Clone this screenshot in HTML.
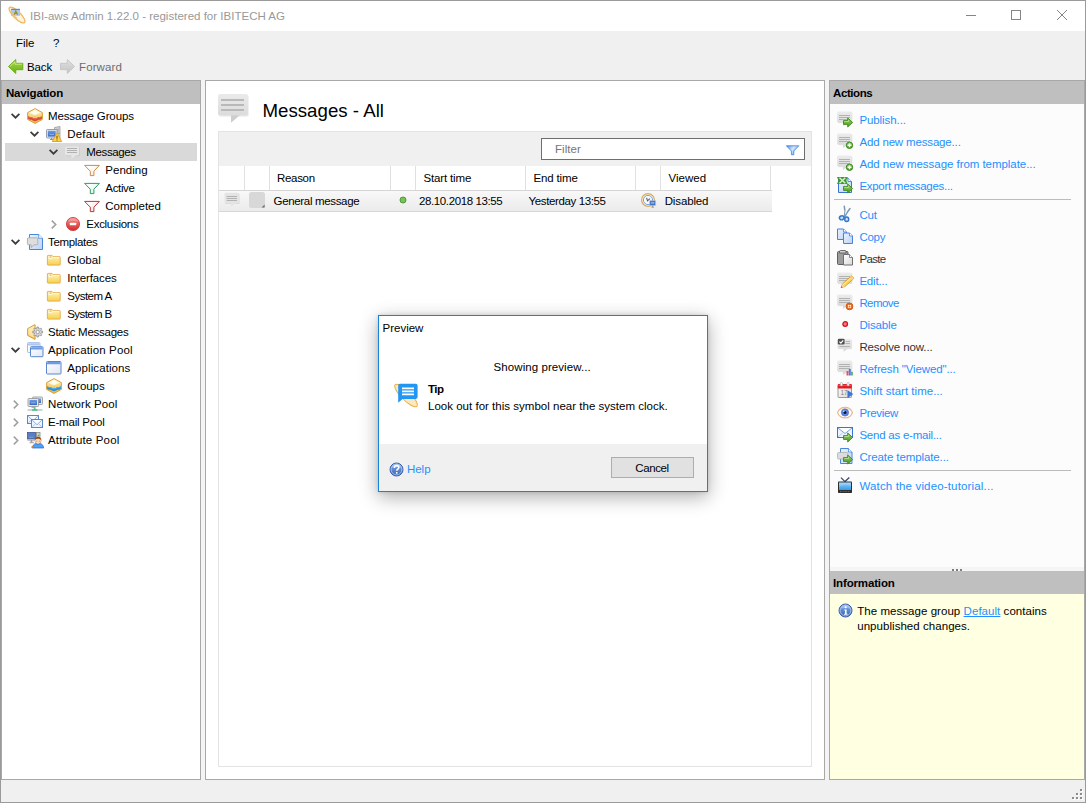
<!DOCTYPE html>
<html><head><meta charset="utf-8"><title>IBI-aws Admin</title>
<style>
*{box-sizing:border-box;margin:0;padding:0}
html,body{width:1086px;height:803px;overflow:hidden}
body{background:#f0f0f0;font-family:"Liberation Sans",sans-serif;font-size:11.5px;color:#000;position:relative}
.abs{position:absolute}
.t{position:absolute;white-space:nowrap;line-height:14px;height:14px}
.b{font-weight:bold}
svg{position:absolute;overflow:visible}
svg.i{width:16px;height:16px}
#win{position:absolute;left:0;top:0;width:1086px;height:803px;border:1px solid #9a9a9a}
#title{position:absolute;left:1px;top:1px;width:1084px;height:30px;background:#fff}
.hdr{position:absolute;height:23px;background:#bfbfbf}
.panel{position:absolute;background:#fff;border:1px solid #a8a8a8}
.lnk{color:#1e90ff}
.vs{position:absolute;width:1px;background:#e0e0e0;top:166px;height:24px}
</style></head><body>

<svg width="0" height="0" style="left:-10px;top:-10px"><defs><linearGradient id="gBub" x1="0" y1="0" x2="0" y2="1"><stop offset="0" stop-color="#ececec"/><stop offset="1" stop-color="#d6d6d6"/></linearGradient><linearGradient id="gBubL" x1="0" y1="0" x2="0" y2="1"><stop offset="0" stop-color="#eaeaea"/><stop offset="1" stop-color="#dcdcdc"/></linearGradient><linearGradient id="gGreen" x1="0" y1="0" x2="0" y2="1"><stop offset="0" stop-color="#a4d84a"/><stop offset="1" stop-color="#6cb010"/></linearGradient><linearGradient id="gGA" x1="0" y1="0" x2="0" y2="1"><stop offset="0" stop-color="#9ad06a"/><stop offset="1" stop-color="#4a9a20"/></linearGradient><linearGradient id="gFold" x1="0" y1="0" x2="0" y2="1"><stop offset="0" stop-color="#fef6d0"/><stop offset="0.35" stop-color="#fbe89a"/><stop offset="1" stop-color="#f7d04a"/></linearGradient><linearGradient id="gRed" x1="0" y1="0" x2="0" y2="1"><stop offset="0" stop-color="#f48a84"/><stop offset="1" stop-color="#d42c2c"/></linearGradient><linearGradient id="gWin" x1="0" y1="0" x2="1" y2="1"><stop offset="0" stop-color="#fff"/><stop offset="1" stop-color="#dfe6f4"/></linearGradient><linearGradient id="gBox" x1="0" y1="0" x2="0" y2="1"><stop offset="0" stop-color="#fdf0c0"/><stop offset="1" stop-color="#f4b830"/></linearGradient><linearGradient id="gDoc" x1="0" y1="0" x2="1" y2="1"><stop offset="0" stop-color="#eaf2fe"/><stop offset="1" stop-color="#bcd4f6"/></linearGradient><linearGradient id="gScr" x1="0" y1="0" x2="0" y2="1"><stop offset="0" stop-color="#6a9ae4"/><stop offset="1" stop-color="#3a6cc8"/></linearGradient><linearGradient id="gInfo" x1="0" y1="0" x2="0" y2="1"><stop offset="0" stop-color="#86aee6"/><stop offset="1" stop-color="#3464bc"/></linearGradient><linearGradient id="gTv" x1="0" y1="0" x2="0" y2="1"><stop offset="0" stop-color="#8ad0fa"/><stop offset="1" stop-color="#3a98e8"/></linearGradient><linearGradient id="gPap" x1="0" y1="0" x2="1" y2="1"><stop offset="0" stop-color="#fff"/><stop offset="1" stop-color="#d8d8d8"/></linearGradient><linearGradient id="gGray" x1="0" y1="0" x2="0" y2="1"><stop offset="0" stop-color="#e0e0e0"/><stop offset="1" stop-color="#c4c4c4"/></linearGradient></defs></svg>
<div id="win"></div><div id="title"></div>
<svg class="i" style="left:8px;top:8px" viewBox="0 0 16 16"><ellipse cx="9" cy="7" rx="10.600" ry="3.500" transform="rotate(45 9 7)" fill="#fef4de" stroke="#efb860" stroke-width="1.300"/><rect x="3" y="1" width="9" height="6.800" fill="#a8c8ee"/><path d="M3 1.300h9" stroke="#4e6e96" stroke-width="0.900"/><path d="M5.200 7.500l-1.500-2 -0.700-3.500" stroke="#efb860" stroke-width="1" fill="none" opacity="0.700"/><path d="M6.200 6.800l1.600-4 1.800 4M6.900 5.500h2" stroke="#a88a18" stroke-width="1.100" fill="none"/><path d="M3 4l6 6.500" stroke="#f4c46c" stroke-width="1.200" opacity="0.800"/></svg>
<div class="t " style="left:30px;top:9px;color:#999;letter-spacing:0.013px;">IBI-aws Admin 1.22.0 - registered for IBITECH AG</div>
<svg style="left:960px;top:5px" width="120" height="22" viewBox="0 0 120 22"><path d="M6 10.5h10" stroke="#858585" stroke-width="1" fill="none"/><rect x="51.5" y="5.5" width="9" height="9" stroke="#858585" fill="none"/><path d="M97 5l10 10M107 5l-10 10" stroke="#858585" stroke-width="1" fill="none"/></svg>
<div class="t " style="left:16px;top:35.5px;letter-spacing:-0.083px;">File</div>
<div class="t " style="left:53px;top:35.5px;">?</div>
<svg class="i" style="left:8px;top:59px" viewBox="0 0 16 16"><path d="M0.500 7.500L7.800 0.500v3.800h7v6.400h-7v3.800z" fill="url(#gGreen)" stroke="#66aa10" stroke-width="0.900" stroke-linejoin="round"/><path d="M2 7.500L7 2.700v2.500h7" stroke="#cdee84" stroke-width="0.900" fill="none"/></svg>
<div class="t " style="left:27px;top:59.5px;letter-spacing:-0.145px;">Back</div>
<svg class="i" style="left:60px;top:59px" viewBox="0 0 16 16"><path d="M14.600 7.500L7.300 0.500v3.800H0.500v6.400h6.800v3.800z" fill="url(#gGray)" stroke="#c2c2c2" stroke-width="0.800" stroke-linejoin="round"/></svg>
<div class="t " style="left:79px;top:59.5px;color:#6d6d6d;letter-spacing:0.116px;">Forward</div>
<div class="abs" style="left:201px;top:80px;width:4px;height:700px;background:#f4f4f4"></div><div class="abs" style="left:825px;top:80px;width:4px;height:700px;background:#f4f4f4"></div>
<div class="panel" style="left:1px;top:80px;width:200px;height:700px"></div>
<div class="hdr" style="left:2px;top:81px;width:198px"></div>
<div class="t b" style="left:6px;top:86px;letter-spacing:-0.180px;">Navigation</div>
<div class="abs" style="left:5px;top:143px;width:192px;height:18px;background:#d9d9d9"></div>
<svg style="left:11px;top:113px" width="9" height="6" viewBox="0 0 9 6"><path d="M0.6 0.8L4.5 4.7L8.4 0.8" stroke="#3c3c3c" stroke-width="1.7" fill="none"/></svg>
<svg class="i" style="left:27px;top:108px" viewBox="0 0 16 16"><path d="M8 0.600L15.400 4.600v6.800L8 15.400 0.600 11.400V4.600z" fill="url(#gBox)" stroke="#d8a040" stroke-width="1" stroke-linejoin="round"/><path d="M8 1.600L14 4.800 8 7.600 2 4.800z" fill="#fdf6dc"/><path d="M8 2.400L11.500 4.600 8 6.300 4.500 4.600z" fill="#fffef6"/><path d="M1.100 8.300l1.700 0.700 1.700-0.100 1.700 1 1.800 0.400 1.800-0.400 1.700-1 1.700 0.100 1.700-0.700v2.500l-1.700 0.900-1.700 0.100-1.700 0.900-1.800 0.500-1.800-0.500-1.700-0.900-1.700-0.100-1.700-0.900z" fill="#d8483a"/><path d="M1.100 8.300l1.700 0.700 1.700-0.100 1.700 1 1.800 0.400 1.800-0.400 1.700-1 1.700 0.100 1.700-0.700v1l-1.700 0.800-1.700 0-1.700 0.900-1.800 0.400-1.800-0.400-1.700-0.900-1.700 0-1.700-0.800z" fill="#e8685a"/><path d="M8 7.600v2" stroke="#e8b84a" stroke-width="0.600"/></svg>
<div class="t " style="left:48px;top:109px;letter-spacing:-0.127px;">Message Groups</div>
<svg style="left:30px;top:131px" width="9" height="6" viewBox="0 0 9 6"><path d="M0.6 0.8L4.5 4.7L8.4 0.8" stroke="#3c3c3c" stroke-width="1.7" fill="none"/></svg>
<svg class="i" style="left:46px;top:126px" viewBox="0 0 16 16"><path d="M8.500 1.500l5.500-1v12.500l-5.500 0.500z" fill="#d4d4d4" stroke="#9a9a9a" stroke-width="0.800"/><path d="M10 3.300h3M10 5h3" stroke="#8a8a8a" stroke-width="0.700"/><circle cx="12.800" cy="7.200" r="0.700" fill="#4aba4a"/><rect x="0.500" y="3.500" width="10.500" height="8.500" rx="0.800" fill="#e4e8ee" stroke="#8a96a8" stroke-width="0.900"/><rect x="1.800" y="4.800" width="7.900" height="5.800" fill="url(#gScr)"/><path d="M3.500 8.600h4.500" stroke="#9ac0f4" stroke-width="0.800"/><path d="M4 13.500h5M5.500 12v1.500" stroke="#8a96a8" stroke-width="1"/><path d="M11 6.800L15.700 15.500H6.300z" fill="#fbd648" stroke="#e09a30" stroke-width="0.900" stroke-linejoin="round"/><path d="M11 9.800v3" stroke="#9a5a00" stroke-width="1.200"/><rect x="10.400" y="13.400" width="1.200" height="1.100" fill="#9a5a00"/></svg>
<div class="t " style="left:67.3px;top:127px;letter-spacing:0.180px;">Default</div>
<svg style="left:49px;top:149px" width="9" height="6" viewBox="0 0 9 6"><path d="M0.6 0.8L4.5 4.7L8.4 0.8" stroke="#3c3c3c" stroke-width="1.7" fill="none"/></svg>
<svg class="i" style="left:65px;top:144px" viewBox="0 0 16 16"><rect x="0.6" y="3.3" width="14" height="9" rx="1.2" fill="#000" opacity="0.09"/><path d="M1.2 2.5h11.6a1.2 1.2 0 0 1 1.2 1.2v6.6a1.2 1.2 0 0 1-1.2 1.2H11.0l-4.500 3v-3H1.2a1.2 1.2 0 0 1-1.2-1.2v-6.6a1.2 1.2 0 0 1 1.2-1.2z" fill="#e6e6e6"/><path d="M2 4.5H12" stroke="#b2b2b2" stroke-width="1"/><path d="M2 6.5H12" stroke="#b2b2b2" stroke-width="1"/><path d="M2 8.5H12" stroke="#b2b2b2" stroke-width="1"/></svg>
<div class="t " style="left:86.3px;top:145px;letter-spacing:-0.378px;">Messages</div>
<svg class="i" style="left:84px;top:162px" viewBox="0 0 16 16"><linearGradient id="gfo" x1="0" y1="0" x2="1" y2="0.600"><stop offset="0.350" stop-color="#fff"/><stop offset="1" stop-color="#fbe9d6"/></linearGradient><path d="M0.600 3.400h14.800L9.900 9.200v4.400h-3.600V9.200z" fill="url(#gfo)" stroke="#cf8a4c" stroke-width="1" stroke-linejoin="miter"/></svg>
<div class="t " style="left:105.3px;top:163px;letter-spacing:0.026px;">Pending</div>
<svg class="i" style="left:84px;top:180px" viewBox="0 0 16 16"><linearGradient id="gfg" x1="0" y1="0" x2="1" y2="0.600"><stop offset="0.350" stop-color="#fff"/><stop offset="1" stop-color="#d4f2e2"/></linearGradient><path d="M0.600 3.400h14.800L9.900 9.200v4.400h-3.600V9.200z" fill="url(#gfg)" stroke="#2c9e68" stroke-width="1" stroke-linejoin="miter"/></svg>
<div class="t " style="left:105.3px;top:181px;letter-spacing:-0.338px;">Active</div>
<svg class="i" style="left:84px;top:198px" viewBox="0 0 16 16"><linearGradient id="gfr" x1="0" y1="0" x2="1" y2="0.600"><stop offset="0.350" stop-color="#fff"/><stop offset="1" stop-color="#f6d8d8"/></linearGradient><path d="M0.600 3.400h14.800L9.900 9.200v4.400h-3.600V9.200z" fill="url(#gfr)" stroke="#b43a3e" stroke-width="1" stroke-linejoin="miter"/></svg>
<div class="t " style="left:105.3px;top:199px;letter-spacing:-0.003px;">Completed</div>
<svg style="left:51px;top:220px" width="6" height="9" viewBox="0 0 6 9"><path d="M0.8 0.6L4.7 4.5L0.8 8.4" stroke="#a0a0a0" stroke-width="1.6" fill="none"/></svg>
<svg class="i" style="left:65px;top:216px" viewBox="0 0 16 16"><circle cx="8" cy="8" r="6.600" fill="url(#gRed)" stroke="#c83838" stroke-width="0.800"/><path d="M2.600 6a5.800 5.800 0 0 1 10.800 0c-3-1.200-7.800-1.200-10.800 0z" fill="#fff" opacity="0.250"/><rect x="4.800" y="6.800" width="6.400" height="2.400" rx="0.500" fill="#fff"/></svg>
<div class="t " style="left:86.3px;top:217px;letter-spacing:-0.287px;">Exclusions</div>
<svg style="left:11px;top:239px" width="9" height="6" viewBox="0 0 9 6"><path d="M0.6 0.8L4.5 4.7L8.4 0.8" stroke="#3c3c3c" stroke-width="1.7" fill="none"/></svg>
<svg class="i" style="left:27px;top:234px" viewBox="0 0 16 16"><path d="M2.500 0.500h9.200l3.800 3.800v11.200h-13z" fill="url(#gDoc)" stroke="#4a86d8" stroke-width="1" stroke-linejoin="round"/><path d="M11.700 0.500v3.800h3.800" fill="#fff" stroke="#4a86d8" stroke-width="0.800" stroke-linejoin="round"/><path d="M1.600 3.800h8a1.200 1.200 0 0 1 1.200 1.200v4.600a1.200 1.200 0 0 1-1.200 1.200H7l-2.800 2.800v-2.800H1.600a1.200 1.200 0 0 1-1.200-1.200V5a1.200 1.200 0 0 1 1.200-1.200z" fill="#dedede" stroke="#a4a4a4" stroke-width="0.800"/></svg>
<div class="t " style="left:48px;top:235px;letter-spacing:-0.336px;">Templates</div>
<svg class="i" style="left:46px;top:252px" viewBox="0 0 16 16"><path d="M1.400 4a0.600 0.600 0 0 1 0.600-0.600h4l1 1.200h6.600a0.600 0.600 0 0 1 0.600 0.600v7.300a0.600 0.600 0 0 1-0.600 0.600H2a0.600 0.600 0 0 1-0.600-0.600z" fill="url(#gFold)" stroke="#e6a648" stroke-width="0.900"/><path d="M2.300 6.400h3.800l0.900-1h6.200" stroke="#fffbe6" stroke-width="0.900" fill="none"/><path d="M3.800 5h1.600" stroke="#e0b050" stroke-width="1"/></svg>
<div class="t " style="left:67.3px;top:253px;letter-spacing:0.058px;">Global</div>
<svg class="i" style="left:46px;top:270px" viewBox="0 0 16 16"><path d="M1.400 4a0.600 0.600 0 0 1 0.600-0.600h4l1 1.200h6.600a0.600 0.600 0 0 1 0.600 0.600v7.300a0.600 0.600 0 0 1-0.600 0.600H2a0.600 0.600 0 0 1-0.600-0.600z" fill="url(#gFold)" stroke="#e6a648" stroke-width="0.900"/><path d="M2.300 6.400h3.800l0.900-1h6.200" stroke="#fffbe6" stroke-width="0.900" fill="none"/><path d="M3.800 5h1.600" stroke="#e0b050" stroke-width="1"/></svg>
<div class="t " style="left:67.3px;top:271px;letter-spacing:-0.120px;">Interfaces</div>
<svg class="i" style="left:46px;top:288px" viewBox="0 0 16 16"><path d="M1.400 4a0.600 0.600 0 0 1 0.600-0.600h4l1 1.200h6.600a0.600 0.600 0 0 1 0.600 0.600v7.300a0.600 0.600 0 0 1-0.600 0.600H2a0.600 0.600 0 0 1-0.600-0.600z" fill="url(#gFold)" stroke="#e6a648" stroke-width="0.900"/><path d="M2.300 6.400h3.800l0.900-1h6.200" stroke="#fffbe6" stroke-width="0.900" fill="none"/><path d="M3.800 5h1.600" stroke="#e0b050" stroke-width="1"/></svg>
<div class="t " style="left:67.3px;top:289px;letter-spacing:-0.522px;">System A</div>
<svg class="i" style="left:46px;top:306px" viewBox="0 0 16 16"><path d="M1.400 4a0.600 0.600 0 0 1 0.600-0.600h4l1 1.200h6.600a0.600 0.600 0 0 1 0.600 0.600v7.300a0.600 0.600 0 0 1-0.600 0.600H2a0.600 0.600 0 0 1-0.600-0.600z" fill="url(#gFold)" stroke="#e6a648" stroke-width="0.900"/><path d="M2.300 6.400h3.800l0.900-1h6.200" stroke="#fffbe6" stroke-width="0.900" fill="none"/><path d="M3.800 5h1.600" stroke="#e0b050" stroke-width="1"/></svg>
<div class="t " style="left:67.3px;top:307px;letter-spacing:-0.602px;">System B</div>
<svg class="i" style="left:27px;top:324px" viewBox="0 0 16 16"><path d="M8 0.600v14.800L0.600 11.400V4.600z" fill="url(#gBox)" stroke="#d8a040" stroke-width="1" stroke-linejoin="round"/><path d="M7.500 1.800L1.600 5v5.800l5.900 3.200z" fill="#fdeebc" opacity="0.700"/><path d="M8 1v14" stroke="#e8b048" stroke-width="0.800"/><path d="M15.63 7.14L15.63 8.86L14.10 8.82L13.68 9.83L14.79 10.88L13.58 12.09L12.53 10.98L11.52 11.40L11.56 12.93L9.84 12.93L9.88 11.40L8.87 10.98L7.82 12.09L6.61 10.88L7.72 9.83L7.30 8.82L5.77 8.86L5.77 7.14L7.30 7.18L7.72 6.17L6.61 5.12L7.82 3.91L8.87 5.02L9.88 4.60L9.84 3.07L11.56 3.07L11.52 4.60L12.53 5.02L13.58 3.91L14.79 5.12L13.68 6.17L14.10 7.18z" fill="#dcdcdc" stroke="#8c8c8c" stroke-width="0.800" stroke-linejoin="round"/><circle cx="10.700" cy="8" r="1.700" fill="#fcfcfc" stroke="#8c8c8c" stroke-width="0.800"/></svg>
<div class="t " style="left:48px;top:325px;letter-spacing:-0.265px;">Static Messages</div>
<svg style="left:11px;top:347px" width="9" height="6" viewBox="0 0 9 6"><path d="M0.6 0.8L4.5 4.7L8.4 0.8" stroke="#3c3c3c" stroke-width="1.7" fill="none"/></svg>
<svg class="i" style="left:27px;top:342px" viewBox="0 0 16 16"><g opacity="0.55"><rect x="0.5" y="0.7" width="12.5" height="9.8" rx="0.800" fill="url(#gWin)" stroke="#5a86d0" stroke-width="1"/><path d="M1.0 3.5v-1.300a1 1 0 0 1 1-1h9.5a1 1 0 0 1 1 1v1.300z" fill="#6e9ce6"/></g><g opacity="1"><rect x="3.5" y="4.7" width="12.5" height="10" rx="0.800" fill="url(#gWin)" stroke="#5a86d0" stroke-width="1"/><path d="M4.0 7.5v-1.300a1 1 0 0 1 1-1h9.5a1 1 0 0 1 1 1v1.300z" fill="#6e9ce6"/></g></svg>
<div class="t " style="left:48px;top:343px;letter-spacing:0.138px;">Application Pool</div>
<svg class="i" style="left:46px;top:360px" viewBox="0 0 16 16"><g opacity="1"><rect x="0.5" y="1.5" width="14.5" height="12.5" rx="0.800" fill="url(#gWin)" stroke="#5a86d0" stroke-width="1"/><path d="M1.0 4.3v-1.300a1 1 0 0 1 1-1h11.5a1 1 0 0 1 1 1v1.300z" fill="#6e9ce6"/></g></svg>
<div class="t " style="left:67.3px;top:361px;letter-spacing:0.090px;">Applications</div>
<svg class="i" style="left:46px;top:378px" viewBox="0 0 16 16"><path d="M8 0.600L15.400 4.600v6.800L8 15.400 0.600 11.400V4.600z" fill="url(#gBox)" stroke="#d8a040" stroke-width="1" stroke-linejoin="round"/><path d="M8 1.600L14 4.800 8 7.600 2 4.800z" fill="#fdf6dc"/><path d="M8 2.400L11.500 4.600 8 6.300 4.500 4.600z" fill="#fffef6"/><path d="M1.100 8.300l1.700 0.700 1.700-0.100 1.700 1 1.800 0.400 1.800-0.400 1.700-1 1.700 0.100 1.700-0.700v2.500l-1.700 0.900-1.700 0.100-1.700 0.900-1.800 0.500-1.800-0.500-1.700-0.900-1.700-0.100-1.700-0.900z" fill="#2a8ed8"/><path d="M1.100 8.300l1.700 0.700 1.700-0.100 1.700 1 1.800 0.400 1.800-0.400 1.700-1 1.700 0.100 1.700-0.700v1l-1.700 0.800-1.700 0-1.700 0.900-1.800 0.400-1.800-0.400-1.700-0.900-1.700 0-1.700-0.800z" fill="#4ab0e8"/><path d="M8 7.600v2" stroke="#e8b84a" stroke-width="0.600"/></svg>
<div class="t " style="left:67.3px;top:379px;letter-spacing:-0.070px;">Groups</div>
<svg style="left:13px;top:400px" width="6" height="9" viewBox="0 0 6 9"><path d="M0.8 0.6L4.7 4.5L0.8 8.4" stroke="#a0a0a0" stroke-width="1.6" fill="none"/></svg>
<svg class="i" style="left:27px;top:396px" viewBox="0 0 16 16"><rect x="5.5" y="1" width="10" height="7.5" rx="0.800" fill="#e8e8e8" stroke="#909090" stroke-width="0.800"/><rect x="7.0" y="2.5" width="7" height="4.5" fill="url(#gScr)"/><path d="M8.5 5.05h4" stroke="#9abcf0" stroke-width="0.800"/><rect x="1" y="2.5" width="10.5" height="8" rx="0.800" fill="#e8e8e8" stroke="#909090" stroke-width="0.800"/><rect x="2.5" y="4.0" width="7.5" height="5" fill="url(#gScr)"/><path d="M4 6.8h4.5" stroke="#9abcf0" stroke-width="0.800"/><path d="M4.500 11.500h4" stroke="#b0b0b0" stroke-width="1.200"/><path d="M0.500 14h15" stroke="#c4c8cc" stroke-width="1.600"/><path d="M5 14h5.500M7.700 11.500v2.500" stroke="#4abf86" stroke-width="1.600"/></svg>
<div class="t " style="left:48px;top:397px;letter-spacing:0.092px;">Network Pool</div>
<svg style="left:13px;top:418px" width="6" height="9" viewBox="0 0 6 9"><path d="M0.8 0.6L4.7 4.5L0.8 8.4" stroke="#a0a0a0" stroke-width="1.6" fill="none"/></svg>
<svg class="i" style="left:27px;top:414px" viewBox="0 0 16 16"><rect x="0.5" y="1.5" width="11" height="8" fill="#f0f6ff" stroke="#5a88cc" stroke-width="1"/><path d="M1.3 2.3l4.7 4.4 4.7-4.4" fill="#fff" stroke="#7aa4e0" stroke-width="0.900"/><path d="M1.3 8.7l3.52 -3.2M10.7 8.7l-3.52 -3.2" stroke="#9abcec" stroke-width="0.800"/><rect x="4.5" y="5.5" width="11" height="8" fill="#f0f6ff" stroke="#5a88cc" stroke-width="1"/><path d="M5.3 6.3l4.7 4.4 4.7-4.4" fill="#fff" stroke="#7aa4e0" stroke-width="0.900"/><path d="M5.3 12.7l3.52 -3.2M14.7 12.7l-3.52 -3.2" stroke="#9abcec" stroke-width="0.800"/></svg>
<div class="t " style="left:48px;top:415px;letter-spacing:-0.201px;">E-mail Pool</div>
<svg style="left:13px;top:436px" width="6" height="9" viewBox="0 0 6 9"><path d="M0.8 0.6L4.7 4.5L0.8 8.4" stroke="#a0a0a0" stroke-width="1.6" fill="none"/></svg>
<svg class="i" style="left:27px;top:432px" viewBox="0 0 16 16"><rect x="0.500" y="0.500" width="8" height="6.500" fill="#5a7ec0" stroke="#3a5a9a" stroke-width="0.800"/><path d="M2 5.200h4.500" stroke="#8aaae0" stroke-width="0.700"/><path d="M0.500 8h8M2.500 10.500h4.500" stroke="#b4b4b4" stroke-width="1.600"/><path d="M4.500 8v2.500" stroke="#9a9a9a" stroke-width="1.500"/><rect x="9.500" y="0.500" width="3.500" height="7" fill="#d0d0d0" stroke="#8a8a8a" stroke-width="0.800"/><path d="M10.200 4.200l1.100-1.700 1.100 1.700z" fill="#3aba3a"/><circle cx="11" cy="8.600" r="3.200" fill="#fbd9c0" stroke="#c88a5a" stroke-width="0.500"/><path d="M7.700 8.300c0-2.300 1.500-3.500 3.300-3.500s3.300 1.200 3.300 3.500c-1.100-1.300-2.300-1.500-3.300-1.500s-2.200 0.200-3.300 1.500z" fill="#9a4a10"/><circle cx="9.800" cy="9.100" r="0.450" fill="#333"/><circle cx="12.200" cy="9.100" r="0.450" fill="#333"/><path d="M5.300 16c0.300-2.600 1.700-4.200 3.700-4.500l2 1.300 2-1.300c2 0.300 3.400 1.900 3.700 4.500z" fill="#4aa2f8" stroke="#2a62d0" stroke-width="0.700"/><rect x="4.500" y="14.200" width="1.500" height="1.800" fill="#e87a20"/></svg>
<div class="t " style="left:48px;top:433px;letter-spacing:0.175px;">Attribute Pool</div>
<div class="panel" style="left:205px;top:80px;width:620px;height:700px"></div>
<svg style="left:218px;top:94px" width="30" height="30" viewBox="0 0 30 30"><rect x="0.800" y="1.200" width="30" height="21.500" rx="2" fill="#000" opacity="0.070"/><path d="M13 21v7.800l9-7.800z" fill="#cdcdcd"/><path d="M2 0h26a2 2 0 0 1 2 2v17.500a2 2 0 0 1-2 2H2a2 2 0 0 1-2-2V2a2 2 0 0 1 2-2z" fill="url(#gBubL)"/><path d="M3 6h23M3 11h23M3 16h23" stroke="#b9b9b9" stroke-width="2"/></svg>
<div class="t " style="left:262.5px;top:99px;font-size:18.67px;line-height:24px;height:24px;letter-spacing:0.013px;">Messages - All</div>
<div class="abs" style="left:218px;top:131px;width:594px;height:636px;background:#fff;border:1px solid #e3e3e3"></div>
<div class="abs" style="left:219px;top:132px;width:592px;height:34px;background:#f0f0f0"></div>
<div class="abs" style="left:541px;top:138px;width:264px;height:22px;background:#fff;border:1px solid #6e6e6e"></div>
<div class="t " style="left:555px;top:142px;color:#767676;letter-spacing:0.040px;">Filter</div>
<svg style="left:786px;top:144.5px" width="13" height="11" viewBox="0 0 13 11"><linearGradient id="gFl" x1="0" y1="0" x2="1" y2="0.500"><stop offset="0" stop-color="#4a8ee2"/><stop offset="0.550" stop-color="#d4e6fb"/><stop offset="1" stop-color="#6aa4ea"/></linearGradient><path d="M0.400 0.800h12.400L7.800 6v3.700h-2.400V6z" fill="url(#gFl)" stroke="#3a82dc" stroke-width="0.800" stroke-linejoin="round"/></svg>
<div class="abs" style="left:219px;top:190px;width:553px;height:1px;background:#d5d5d5"></div>
<div class="vs" style="left:244px"></div>
<div class="vs" style="left:269px"></div>
<div class="vs" style="left:390px"></div>
<div class="vs" style="left:415px"></div>
<div class="vs" style="left:525px"></div>
<div class="vs" style="left:635px"></div>
<div class="vs" style="left:660px"></div>
<div class="vs" style="left:770px"></div>
<div class="abs" style="left:219px;top:191px;width:553px;height:21px;background:linear-gradient(#f8f8f8,#ebebeb);border-bottom:1px solid #d6d6d6"></div>
<div class="t " style="left:277px;top:171px;letter-spacing:-0.307px;">Reason</div>
<div class="t " style="left:423.5px;top:171px;letter-spacing:-0.152px;">Start time</div>
<div class="t " style="left:533.4px;top:171px;letter-spacing:-0.136px;">End time</div>
<div class="t " style="left:668.4px;top:171px;letter-spacing:0.031px;">Viewed</div>
<svg class="i" style="left:224px;top:192px" viewBox="0 0 16 16"><rect x="1.2" y="1.6" width="14.4" height="10.5" rx="1.2" fill="#000" opacity="0.09"/><path d="M1.7999999999999998 0.8h12.0a1.2 1.2 0 0 1 1.2 1.2v8.1a1.2 1.2 0 0 1-1.2 1.2H11.5l-4.500 3.5v-3.5H1.7999999999999998a1.2 1.2 0 0 1-1.2-1.2v-8.1a1.2 1.2 0 0 1 1.2-1.2z" fill="#e4e4e4"/><path d="M2.6 4.5H13.0" stroke="#b2b2b2" stroke-width="1"/><path d="M2.6 6.5H13.0" stroke="#b2b2b2" stroke-width="1"/><path d="M2.6 8.5H13.0" stroke="#b2b2b2" stroke-width="1"/></svg>
<svg style="left:249px;top:192px" width="17" height="17" viewBox="0 0 17 17"><rect x="0" y="0" width="16" height="16" rx="2.5" fill="#d8d8d8"/><path d="M12.600 15.600h3v-3z" fill="#6a6a6a"/></svg>
<div class="t " style="left:273.6px;top:194px;letter-spacing:-0.339px;">General message</div>
<svg style="left:399px;top:196px" width="8" height="8" viewBox="0 0 8 8"><circle cx="4" cy="4" r="3" fill="#7cc05a" stroke="#4a9a34" stroke-width="1"/></svg>
<div class="t " style="left:419px;top:194px;letter-spacing:-0.389px;">28.10.2018 13:55</div>
<div class="t " style="left:528.6px;top:194px;letter-spacing:-0.380px;">Yesterday 13:55</div>
<svg class="i" style="left:640px;top:193px" viewBox="0 0 16 16"><circle cx="8" cy="7" r="6.400" fill="#fdf3dc" stroke="#d8ae62" stroke-width="1.200"/><circle cx="8" cy="7" r="4.600" fill="#f6faff" stroke="#78a2e8" stroke-width="1"/><path d="M6.600 4.800l0.900 3 2.400-2.200" stroke="#5a5a5a" fill="none" stroke-width="1.100"/><rect x="9.600" y="7.500" width="6" height="5" rx="0.400" fill="#3f74c6" stroke="#c4c8cc" stroke-width="0.600"/><rect x="10.800" y="8.800" width="3.600" height="2" fill="#86aae0"/><path d="M11.500 14.200h2.400M12.700 12.500v1.500" stroke="#8a8a8a" stroke-width="0.900"/></svg>
<div class="t " style="left:664.7px;top:194px;letter-spacing:-0.131px;">Disabled</div>
<div class="panel" style="left:829px;top:80px;width:256px;height:700px;background:#fcfcfc"></div>
<div class="hdr" style="left:830px;top:81px;width:254px"></div>
<div class="t b" style="left:833px;top:86px;letter-spacing:-0.410px;">Actions</div>
<svg class="i" style="left:837px;top:111px" viewBox="0 0 16 16"><rect x="0.8" y="1.3" width="14.6" height="11" rx="1.2" fill="#000" opacity="0.09"/><path d="M1.4 0.5h12.2a1.2 1.2 0 0 1 1.2 1.2v8.6a1.2 1.2 0 0 1-1.2 1.2H10.5l-4.500 3.5v-3.5H1.4a1.2 1.2 0 0 1-1.2-1.2v-8.6a1.2 1.2 0 0 1 1.2-1.2z" fill="url(#gBub)"/><path d="M2 4.5H13" stroke="#b2b2b2" stroke-width="1"/><path d="M2 6.5H13" stroke="#b2b2b2" stroke-width="1"/><path d="M2 8.5H13" stroke="#b2b2b2" stroke-width="1"/><path d="M6.500 9.600h4.200V7l4.900 4.500-4.900 4.500v-2.600H6.500z" fill="url(#gGA)" stroke="#3e8a1c" stroke-width="0.900" stroke-linejoin="round"/><path d="M7.300 10.500h4.200v-1.500" stroke="#c4e8a0" stroke-width="0.700" fill="none"/></svg>
<div class="t lnk" style="left:859.4px;top:113px;letter-spacing:-0.081px;">Publish...</div>
<svg class="i" style="left:837px;top:133px" viewBox="0 0 16 16"><rect x="0.8" y="1.3" width="14.6" height="11" rx="1.2" fill="#000" opacity="0.09"/><path d="M1.4 0.5h12.2a1.2 1.2 0 0 1 1.2 1.2v8.6a1.2 1.2 0 0 1-1.2 1.2H10.5l-4.500 3.5v-3.5H1.4a1.2 1.2 0 0 1-1.2-1.2v-8.6a1.2 1.2 0 0 1 1.2-1.2z" fill="url(#gBub)"/><path d="M2 4.5H13" stroke="#b2b2b2" stroke-width="1"/><path d="M2 6.5H13" stroke="#b2b2b2" stroke-width="1"/><path d="M2 8.5H13" stroke="#b2b2b2" stroke-width="1"/><circle cx="12.500" cy="12.300" r="3.200" fill="url(#gGA)" stroke="#2e8216" stroke-width="0.900"/><path d="M10.600 12.300h3.800M12.500 10.400v3.800" stroke="#fff" stroke-width="1.400"/></svg>
<div class="t lnk" style="left:859.4px;top:135px;letter-spacing:-0.161px;">Add new message...</div>
<svg class="i" style="left:837px;top:155px" viewBox="0 0 16 16"><rect x="0.8" y="1.3" width="14.6" height="11" rx="1.2" fill="#000" opacity="0.09"/><path d="M1.4 0.5h12.2a1.2 1.2 0 0 1 1.2 1.2v8.6a1.2 1.2 0 0 1-1.2 1.2H10.5l-4.500 3.5v-3.5H1.4a1.2 1.2 0 0 1-1.2-1.2v-8.6a1.2 1.2 0 0 1 1.2-1.2z" fill="url(#gBub)"/><path d="M2 4.5H13" stroke="#b2b2b2" stroke-width="1"/><path d="M2 6.5H13" stroke="#b2b2b2" stroke-width="1"/><path d="M2 8.5H13" stroke="#b2b2b2" stroke-width="1"/><circle cx="12.500" cy="12.300" r="3.200" fill="url(#gGA)" stroke="#2e8216" stroke-width="0.900"/><path d="M10.600 12.300h3.800M12.500 10.400v3.800" stroke="#fff" stroke-width="1.400"/></svg>
<div class="t lnk" style="left:859.4px;top:157px;letter-spacing:-0.044px;">Add new message from template...</div>
<svg class="i" style="left:837px;top:177px" viewBox="0 0 16 16"><path d="M1.500 1h9.500l3.500 3.500v11H1.500z" fill="url(#gDoc)" stroke="#3a74d0" stroke-width="1" stroke-linejoin="round"/><path d="M11 1v3.500h3.500" fill="#fff" stroke="#3a74d0" stroke-width="0.800"/><path d="M0 0h10.500l-1.200 3.300 1.200 3.700H0l1.500-3.500z" fill="#3a9a30"/><path d="M2.500 0.800l5.800 5.400M8.300 0.800l-5.800 5.400" stroke="#d8f0c8" stroke-width="1.500"/><path d="M6.500 9.600h4.200V7l4.900 4.500-4.900 4.500v-2.600H6.500z" fill="url(#gGA)" stroke="#3e8a1c" stroke-width="0.900" stroke-linejoin="round"/><path d="M7.300 10.500h4.200v-1.500" stroke="#c4e8a0" stroke-width="0.700" fill="none"/></svg>
<div class="t lnk" style="left:859.4px;top:179px;letter-spacing:-0.280px;">Export messages...</div>
<svg class="i" style="left:837px;top:206px" viewBox="0 0 16 16"><path d="M7.300 0.300c0.800 3 0.900 6.500 0.200 10.500M13 2.500c-1.800 2.300-3.800 5-5.400 8.300" stroke="#7a98b8" stroke-width="1.500" fill="none" stroke-linecap="round"/><path d="M7.600 4l0.400 5 1.800-3z" fill="#dde6ee"/><ellipse cx="4.700" cy="11.800" rx="2.300" ry="2" fill="#cfe2f8" stroke="#2e78d0" stroke-width="1.500" transform="rotate(-20 4.700 11.800)"/><ellipse cx="9.700" cy="13.200" rx="2" ry="2.300" fill="#cfe2f8" stroke="#2e78d0" stroke-width="1.500"/></svg>
<div class="t lnk" style="left:859.4px;top:208px;letter-spacing:-0.169px;">Cut</div>
<svg class="i" style="left:837px;top:228px" viewBox="0 0 16 16"><path d="M0.5 1h6l3 3v7.5h-9z" fill="url(#gDoc)" stroke="#4a82d6" stroke-width="1" stroke-linejoin="round"/><path d="M6.5 1v3h3" fill="#fff" stroke="#4a82d6" stroke-width="0.800" stroke-linejoin="round"/><path d="M6.5 5h6l3 3v7.5h-9z" fill="url(#gDoc)" stroke="#4a82d6" stroke-width="1" stroke-linejoin="round"/><path d="M12.5 5v3h3" fill="#fff" stroke="#4a82d6" stroke-width="0.800" stroke-linejoin="round"/></svg>
<div class="t lnk" style="left:859.4px;top:230px;letter-spacing:-0.240px;">Copy</div>
<svg class="i" style="left:837px;top:250px" viewBox="0 0 16 16"><rect x="0.500" y="1.500" width="10.500" height="13" rx="1" fill="#9c9c9c" stroke="#5e5e5e" stroke-width="1"/><path d="M2.500 3v-1.500a1 1 0 0 1 1-1h4.500a1 1 0 0 1 1 1v1.500z" fill="#cfcfcf" stroke="#5e5e5e" stroke-width="0.900"/><path d="M6.5 4.5h6l3 3v7.5h-9z" fill="url(#gPap)" stroke="#6e6e6e" stroke-width="1" stroke-linejoin="round"/><path d="M12.5 4.5v3h3" fill="#fff" stroke="#6e6e6e" stroke-width="0.800" stroke-linejoin="round"/></svg>
<div class="t " style="left:859.4px;top:252px;color:#333;letter-spacing:-0.664px;">Paste</div>
<svg class="i" style="left:837px;top:272px" viewBox="0 0 16 16"><rect x="0.8" y="1.3" width="14.6" height="11" rx="1.2" fill="#000" opacity="0.09"/><path d="M1.4 0.5h12.2a1.2 1.2 0 0 1 1.2 1.2v8.6a1.2 1.2 0 0 1-1.2 1.2H10.5l-4.500 3.5v-3.5H1.4a1.2 1.2 0 0 1-1.2-1.2v-8.6a1.2 1.2 0 0 1 1.2-1.2z" fill="url(#gBub)"/><path d="M2 4.5H13" stroke="#b2b2b2" stroke-width="1"/><path d="M2 6.5H13" stroke="#b2b2b2" stroke-width="1"/><path d="M2 8.5H13" stroke="#b2b2b2" stroke-width="1"/><g transform="translate(4 15.700) rotate(-42.200)"><path d="M0 0L3.600-1.800H15a0.900 0.900 0 0 1 0.900 0.900v1.800a0.900 0.900 0 0 1-0.900 0.900H3.600z" fill="#f8d648" stroke="#dc962c" stroke-width="0.800" stroke-linejoin="round"/><path d="M3.600-0.600h9.800" stroke="#fdf09a" stroke-width="1"/><path d="M0 0L3.600-1.800v3.600z" fill="#f6d6ae"/><path d="M0 0L1.400-0.700v1.400z" fill="#6a3410"/><path d="M13.400-1.800h2.100v3.600h-2.100z" fill="#f4c8b4"/></g></svg>
<div class="t lnk" style="left:859.4px;top:274px;letter-spacing:-0.187px;">Edit...</div>
<svg class="i" style="left:837px;top:294px" viewBox="0 0 16 16"><rect x="0.8" y="1.3" width="14.6" height="11" rx="1.2" fill="#000" opacity="0.09"/><path d="M1.4 0.5h12.2a1.2 1.2 0 0 1 1.2 1.2v8.6a1.2 1.2 0 0 1-1.2 1.2H10.5l-4.500 3.5v-3.5H1.4a1.2 1.2 0 0 1-1.2-1.2v-8.6a1.2 1.2 0 0 1 1.2-1.2z" fill="url(#gBub)"/><path d="M2 4.5H13" stroke="#b2b2b2" stroke-width="1"/><path d="M2 6.5H13" stroke="#b2b2b2" stroke-width="1"/><path d="M2 8.5H13" stroke="#b2b2b2" stroke-width="1"/><circle cx="12.500" cy="12.400" r="3.400" fill="#ec6c1c" stroke="#c8500c" stroke-width="0.800"/><path d="M11.200 11.100l2.600 2.600M13.800 11.100l-2.600 2.600" stroke="#fff" stroke-width="1.200" stroke-dasharray="1.300 1.080"/></svg>
<div class="t lnk" style="left:859.4px;top:296px;letter-spacing:-0.588px;">Remove</div>
<svg class="i" style="left:837px;top:316px" viewBox="0 0 16 16"><circle cx="8.200" cy="8" r="2.300" fill="#f47884" stroke="#d8101c" stroke-width="1.300"/></svg>
<div class="t lnk" style="left:859.4px;top:318px;letter-spacing:-0.151px;">Disable</div>
<svg class="i" style="left:837px;top:338px" viewBox="0 0 16 16"><rect x="1.1" y="1.8" width="14" height="9.5" rx="1.2" fill="#000" opacity="0.09"/><path d="M1.7 1h11.6a1.2 1.2 0 0 1 1.2 1.2v7.1a1.2 1.2 0 0 1-1.2 1.2H11.0l-4.500 3.3v-3.3H1.7a1.2 1.2 0 0 1-1.2-1.2v-7.1a1.2 1.2 0 0 1 1.2-1.2z" fill="url(#gBub)"/><path d="M8.500 3.500h4.500M8.500 5.500h4.500M2.500 8.500h10.500" stroke="#b4b4b4" stroke-width="1"/><rect x="0.800" y="0.800" width="6.800" height="5.800" rx="1.300" fill="#4e4e4e"/><path d="M2.400 3.600l1.500 1.500 2.300-2.800" stroke="#fff" fill="none" stroke-width="1.200"/></svg>
<div class="t " style="left:859.4px;top:340px;color:#333;letter-spacing:-0.114px;">Resolve now...</div>
<svg class="i" style="left:837px;top:360px" viewBox="0 0 16 16"><rect x="0.8" y="1.3" width="14.6" height="11" rx="1.2" fill="#000" opacity="0.09"/><path d="M1.4 0.5h12.2a1.2 1.2 0 0 1 1.2 1.2v8.6a1.2 1.2 0 0 1-1.2 1.2H10.5l-4.500 3.5v-3.5H1.4a1.2 1.2 0 0 1-1.2-1.2v-8.6a1.2 1.2 0 0 1 1.2-1.2z" fill="url(#gBub)"/><path d="M2 4.5H13" stroke="#b2b2b2" stroke-width="1"/><path d="M2 6.5H13" stroke="#b2b2b2" stroke-width="1"/><path d="M2 8.5H13" stroke="#b2b2b2" stroke-width="1"/><rect x="9.500" y="11" width="2" height="4.500" fill="#e8505a"/><rect x="11.800" y="9" width="2" height="6.500" fill="#4a7ee0"/><rect x="14.100" y="11.800" width="1.700" height="3.700" fill="#52a852"/></svg>
<div class="t lnk" style="left:859.4px;top:362px;letter-spacing:-0.128px;">Refresh &quot;Viewed&quot;...</div>
<svg class="i" style="left:837px;top:382px" viewBox="0 0 16 16"><rect x="1" y="2.500" width="13.500" height="13" rx="0.800" fill="url(#gPap)" stroke="#8e8e8e" stroke-width="0.900"/><path d="M0.800 6.500v-3.500a1 1 0 0 1 1-1h12a1 1 0 0 1 1 1v3.500z" fill="#e01c24"/><path d="M1.200 3.300h13" stroke="#f4686c" stroke-width="0.800"/><rect x="3.300" y="0.500" width="2.200" height="3.500" rx="1" fill="#f4f4f4" stroke="#a8a8a8" stroke-width="0.600"/><rect x="10" y="0.500" width="2.200" height="3.500" rx="1" fill="#f4f4f4" stroke="#a8a8a8" stroke-width="0.600"/><text x="3.400" y="13" font-family="Liberation Sans,sans-serif" font-size="6.500" fill="#808080">17</text><path d="M10.800 8.800l5 3.300-5 3.300z" fill="#3a78e0" stroke="#2a5ac0" stroke-width="0.500"/></svg>
<div class="t lnk" style="left:859.4px;top:384px;letter-spacing:0.017px;">Shift start time...</div>
<svg class="i" style="left:837px;top:404px" viewBox="0 0 16 16"><path d="M0.600 8.700C1.800 5 4.800 3.400 8 3.400s6.200 1.600 7.400 5.300C14.200 12 11.200 13.800 8 13.800S1.800 12 0.600 8.700z" fill="#fff" stroke="#e8b892" stroke-width="1.200"/><path d="M1.600 7.600C3.200 5.200 5.600 4.300 8 4.300s4.800 0.900 6.400 3.300" stroke="#f2d4be" stroke-width="0.900" fill="none"/><circle cx="8" cy="8.500" r="3.600" fill="#5c86e6" stroke="#3e62c4" stroke-width="0.700"/><circle cx="8" cy="8.500" r="1.500" fill="#10141c"/><circle cx="6.800" cy="7.200" r="0.800" fill="#d4e2ff"/></svg>
<div class="t lnk" style="left:859.4px;top:406px;letter-spacing:-0.329px;">Preview</div>
<svg class="i" style="left:837px;top:426px" viewBox="0 0 16 16"><rect x="0.500" y="1.500" width="15" height="10" fill="#eef4fe" stroke="#3a74cc" stroke-width="1"/><path d="M1 2l7 5.500 7-5.500" fill="#fff" stroke="#6a9ae0" stroke-width="0.900"/><path d="M1 11l4.500-4M15 11l-4.500-4" stroke="#9abcec" stroke-width="0.800"/><path d="M6.500 9.600h4.200V7l4.900 4.500-4.900 4.500v-2.600H6.500z" fill="url(#gGA)" stroke="#3e8a1c" stroke-width="0.900" stroke-linejoin="round"/><path d="M7.300 10.500h4.200v-1.500" stroke="#c4e8a0" stroke-width="0.700" fill="none"/></svg>
<div class="t lnk" style="left:859.4px;top:428px;letter-spacing:-0.229px;">Send as e-mail...</div>
<svg class="i" style="left:837px;top:448px" viewBox="0 0 16 16"><path d="M3.500 0.500h8l3.500 3.500v11.500h-11.500z" fill="url(#gDoc)" stroke="#4a86d8" stroke-width="1" stroke-linejoin="round"/><path d="M11.500 0.500v3.500h3.500" fill="#fff" stroke="#4a86d8" stroke-width="0.800"/><rect x="0.500" y="4.500" width="10.500" height="6.500" rx="1.200" fill="#dcdcdc" stroke="#b0b0b0" stroke-width="0.800"/><path d="M6.500 9.600h4.200V7l4.900 4.500-4.900 4.500v-2.600H6.500z" fill="url(#gGA)" stroke="#3e8a1c" stroke-width="0.900" stroke-linejoin="round"/><path d="M7.300 10.500h4.200v-1.500" stroke="#c4e8a0" stroke-width="0.700" fill="none"/></svg>
<div class="t lnk" style="left:859.4px;top:450px;letter-spacing:-0.111px;">Create template...</div>
<svg class="i" style="left:837px;top:477px" viewBox="0 0 16 16"><path d="M4 0.600l4 4 4.300-4" stroke="#3a4a6a" fill="none" stroke-width="1.300"/><rect x="1" y="4.500" width="14" height="11.500" rx="0.800" fill="#2e2e2e"/><rect x="2" y="5.500" width="12" height="7.500" fill="url(#gTv)"/><path d="M2 5.500h12v3.500c-4-1.500-8-1.500-12 1z" fill="#fff" opacity="0.180"/><rect x="3" y="14" width="1.500" height="1" fill="#e83030"/><path d="M5.500 14.500h7.500" stroke="#6a6a6a" stroke-width="0.800" stroke-dasharray="1.200 0.600"/></svg>
<div class="t lnk" style="left:859.4px;top:479px;letter-spacing:0.157px;">Watch the video-tutorial...</div>
<div class="abs" style="left:834px;top:199px;width:237px;height:1px;background:#bcbcbc"></div>
<div class="abs" style="left:834px;top:470px;width:237px;height:1px;background:#bcbcbc"></div>
<div class="abs" style="left:830px;top:567px;width:254px;height:4px;background:#f5f5f5"></div>
<svg style="left:952px;top:569px" width="11" height="3" viewBox="0 0 11 3"><g fill="#fff"><rect x="1" y="1" width="2" height="2"/><rect x="5" y="1" width="2" height="2"/><rect x="9" y="1" width="2" height="2"/></g><g fill="#7c7c7c"><rect x="0" y="0" width="2" height="2"/><rect x="4" y="0" width="2" height="2"/><rect x="8" y="0" width="2" height="2"/></g></svg>
<div class="abs" style="left:830px;top:571px;width:254px;height:208px;background:#ffffe1"></div>
<div class="hdr" style="left:830px;top:571px;width:254px"></div>
<div class="t b" style="left:833px;top:576px;letter-spacing:-0.141px;">Information</div>
<svg class="i" style="left:837.5px;top:602.5px" viewBox="0 0 16 16"><circle cx="7.500" cy="7.500" r="6.500" fill="url(#gInfo)" stroke="#3a5ea8" stroke-width="1"/><circle cx="7.500" cy="7.500" r="5.400" fill="none" stroke="#b4cef4" stroke-width="0.800"/><path d="M2.600 6a5.200 5.200 0 0 1 9.800 0c-2.600-1.200-7.200-1.200-9.800 0z" fill="#fff" opacity="0.300"/><path d="M6.300 6.400h2.300v4.300h1v1.100H6v-1.100h1V7.500h-0.700z" fill="#fff"/><rect x="6.700" y="3.300" width="1.900" height="1.900" rx="0.400" fill="#fff"/></svg>
<div class="abs" style="left:857.2px;top:604px;width:220px;line-height:15px;letter-spacing:0.05px">The message group <span style="color:#1e90ff;text-decoration:underline">Default</span> contains<br>unpublished changes.</div>
<svg style="left:1071px;top:788px" width="13" height="13" viewBox="0 0 13 13"><g fill="#fff"><rect x="10" y="2" width="2" height="2"/><rect x="6" y="6" width="2" height="2"/><rect x="10" y="6" width="2" height="2"/><rect x="2" y="10" width="2" height="2"/><rect x="6" y="10" width="2" height="2"/><rect x="10" y="10" width="2" height="2"/></g><g fill="#8c8c8c"><rect x="9" y="1" width="2" height="2"/><rect x="5" y="5" width="2" height="2"/><rect x="9" y="5" width="2" height="2"/><rect x="1" y="9" width="2" height="2"/><rect x="5" y="9" width="2" height="2"/><rect x="9" y="9" width="2" height="2"/></g></svg>
<div class="abs" style="left:378px;top:315px;width:330px;height:177px;background:#fff;border:1px solid #1883d7;box-shadow:0 5px 18px rgba(0,0,0,.32),0 0 4px rgba(0,0,0,.14)"></div>
<div class="abs" style="left:379px;top:444px;width:328px;height:47px;background:#f0f0f0"></div>
<div class="t " style="left:382.5px;top:321px;letter-spacing:-0.001px;">Preview</div>
<div class="t " style="left:493.6px;top:360px;letter-spacing:0.067px;">Showing preview...</div>
<svg style="left:395px;top:383px" width="24" height="26" viewBox="0 0 24 26"><ellipse cx="11" cy="12.500" rx="15.300" ry="4.600" transform="rotate(45 11 12.500)" fill="#fbe8c0" stroke="#eaae48" stroke-width="1"/><path d="M5 0.700h15.800a1.800 1.800 0 0 1 1.800 1.800v11.600a1.800 1.800 0 0 1-1.800 1.800H7.500L3.200 19.700V2.500a1.800 1.800 0 0 1 1.800-1.800z" fill="#2196f3"/><path d="M7 5.350h12M7 8.350h12M7 11.350h12" stroke="#fff" stroke-width="1.700"/></svg>
<div class="t b" style="left:428px;top:382px;letter-spacing:-0.516px;">Tip</div>
<div class="t " style="left:428px;top:399px;letter-spacing:0.014px;">Look out for this symbol near the system clock.</div>
<svg class="i" style="left:389px;top:461.5px" viewBox="0 0 16 16"><circle cx="7.500" cy="7.500" r="6.500" fill="url(#gInfo)" stroke="#3a5ea8" stroke-width="1"/><circle cx="7.500" cy="7.500" r="5.400" fill="none" stroke="#b4cef4" stroke-width="0.800"/><path d="M2.600 6a5.200 5.200 0 0 1 9.800 0c-2.600-1.200-7.200-1.200-9.800 0z" fill="#fff" opacity="0.300"/><path d="M5.400 5.900c0-1.500 1-2.300 2.200-2.300s2.200 0.800 2.200 2c0 1.500-2 1.700-2 3.200" stroke="#fff" fill="none" stroke-width="1.600"/><rect x="6.900" y="10" width="1.700" height="1.700" rx="0.400" fill="#fff"/></svg>
<div class="t lnk" style="left:407px;top:462px;letter-spacing:-0.039px;">Help</div>
<div class="abs" style="left:611px;top:457px;width:83px;height:21px;background:#e1e1e1;border:1px solid #adadad"></div>
<div class="t " style="left:635.3px;top:461px;letter-spacing:-0.402px;">Cancel</div>
</body></html>
